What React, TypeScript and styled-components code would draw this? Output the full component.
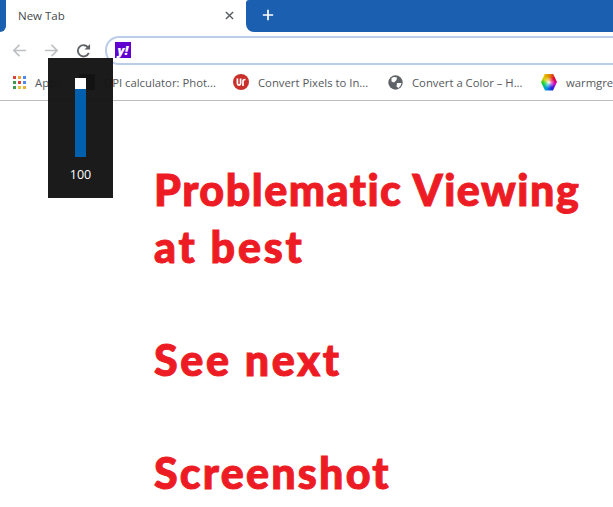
import React from "react"
import styled, { createGlobalStyle } from "styled-components"

const RED = "#ed1c24"
const BLUE = "#1a5fb0"

const Global = createGlobalStyle`
	html, body {
		margin: 0;
		padding: 0;
		background: #fff;
		overflow: hidden;
	}
	body {
		width: 613px;
		height: 507px;
		font-family: "Open Sans", "Liberation Sans", sans-serif;
	}
`

function Apps() {
	const colors = ["#d9443a", "#e8a33d", "#4a8af0", "#3f9a4e", "#d9443a", "#4a8af0", "#3f9a4e", "#e8c33d", "#e8b33d"]
	return <BookmarkSvg width="13" height="13" viewBox="0 0 13 13">
		{colors.map((c, i) => <rect key={i} x={i % 3 * 5} y={Math.floor(i / 3) * 5} width="3" height="3" fill={c} />)}
	</BookmarkSvg>
}

function Globe() {
	return <BookmarkSvg width="15" height="15" viewBox="0 0 15 15">
		<circle cx="7.5" cy="7.5" r="7.2" fill="#5f6368" />
		<path d="M3.5 3 Q6 1.5 9 2.5 L8.5 5 L6 7.5 L3.5 6.5 Z M9 8 L13.5 8 Q13 11 10.5 13 L8.5 11.5 Z" fill="#fff" />
	</BookmarkSvg>
}

function RoundLogo() {
	return <BookmarkSvg width="16" height="16" viewBox="0 0 16 16">
		<circle cx="8" cy="8" r="8" fill="#c9302c" />
		<path d="M4.4 4.5 V9.5 A1.6 1.6 0 0 0 7.6 9.5 V4.5 M10 12 V7 Q10 5.5 12.5 5.5" fill="none" stroke="#fff" strokeWidth="1.7" />
	</BookmarkSvg>
}

export default function App() {
	return <>
		<Global />
		<Page>
			<TabStrip>
				<LeftStub />
				<ActiveTab>
					<TabTitle>New Tab</TabTitle>
					<CloseIcon viewBox="0 0 10 10">
						<path d="M1 1 L9 9 M9 1 L1 9" />
					</CloseIcon>
				</ActiveTab>
				<NewTabArea>
					<PlusIcon viewBox="0 0 14 14">
						<path d="M7 1 V13 M1 7 H13" />
					</PlusIcon>
				</NewTabArea>
			</TabStrip>
			<Toolbar>
				<NavIcon viewBox="0 0 16 16" $color="#bdc0c4">
					<path d="M15 8 H2 M8 2 L2 8 L8 14" />
				</NavIcon>
				<NavIcon viewBox="0 0 16 16" $color="#bdc0c4">
					<path d="M1 8 H14 M8 2 L14 8 L8 14" />
				</NavIcon>
				<ReloadIcon viewBox="0 0 16 16">
					<path d="M13.6 10.5 A6 6 0 1 1 13 5" />
					<path className="head" d="M15 1 V7 H9 Z" />
				</ReloadIcon>
				<Omnibox>
					<YahooBox>y!</YahooBox>
				</Omnibox>
			</Toolbar>
			<Bookmarks>
				<Bookmark $width={66}><Apps /><BookmarkText>Apps</BookmarkText></Bookmark>
				<Bookmark $width={154}><DarkIcon /><BookmarkText>DPI calculator: Phot...</BookmarkText></Bookmark>
				<Bookmark $width={155}><RoundLogo /><BookmarkText>Convert Pixels to In...</BookmarkText></Bookmark>
				<Bookmark $width={153}><Globe /><BookmarkText>Convert a Color – H...</BookmarkText></Bookmark>
				<Bookmark $width={90}><Hexagon /><BookmarkText>warmgrey</BookmarkText></Bookmark>
			</Bookmarks>
			<Content>
				<Heading>
					<Line $spacing={1.5}>Problematic Viewing</Line>
					<Line $spacing={2.8}>at best</Line>
				</Heading>
				<Heading><Line $spacing={2.7}>See next</Line></Heading>
				<Heading><Line $spacing={2.2}>Screenshot</Line></Heading>
			</Content>
			<VolumeFlyout>
				<Slider>
					<Thumb />
				</Slider>
				<VolumeValue>100</VolumeValue>
			</VolumeFlyout>
		</Page>
	</>
}

const Page = styled("div")`
	position: relative;
	width: 613px;
	height: 507px;
	overflow: hidden;
	background: #fff;
`
const TabStrip = styled("div")`
	display: flex;
	height: 32px;
	background: #fff;
`
const LeftStub = styled("div")`
	width: 6px;
	background: ${BLUE};
	border-radius: 0 0 8px 0;
`
const ActiveTab = styled("div")`
	display: flex;
	align-items: center;
	justify-content: space-between;
	box-sizing: border-box;
	width: 240px;
	padding: 0 12px 2px 12px;
	background: #fff;
`
const NewTabArea = styled("div")`
	display: flex;
	align-items: center;
	flex: 1;
	padding: 0 0 2px 16px;
	background: ${BLUE};
	border-radius: 3px 0 0 8px;
`
const TabTitle = styled("span")`
	font-size: 11.5px;
	color: #45494d;
`
const CloseIcon = styled("svg")`
	width: 9px;
	height: 9px;
	path {
		fill: none;
		stroke: #5a5e62;
		stroke-width: 1.6;
	}
`
const PlusIcon = styled("svg")`
	width: 12px;
	height: 12px;
	path {
		fill: none;
		stroke: #fff;
		stroke-width: 2;
	}
`
const Toolbar = styled("div")`
	display: flex;
	align-items: center;
	gap: 17px;
	height: 36px;
	padding-left: 12px;
`
const NavIcon = styled("svg")<{ $color: string }>`
	width: 15px;
	height: 15px;
	path {
		fill: none;
		stroke: ${p => p.$color};
		stroke-width: 1.8;
	}
`
const ReloadIcon = styled("svg")`
	width: 15px;
	height: 15px;
	path {
		fill: none;
		stroke: #5f6368;
		stroke-width: 2;
	}
	path.head {
		fill: #5f6368;
		stroke: none;
	}
`
const Omnibox = styled("div")`
	display: flex;
	align-items: center;
	box-sizing: border-box;
	flex: 1;
	height: 29px;
	margin-right: -30px;
	margin-left: -3px;
	padding-left: 8px;
	border: 2px solid #bccde9;
	border-radius: 14px;
`
const YahooBox = styled("div")`
	display: flex;
	align-items: center;
	justify-content: center;
	width: 16px;
	height: 16px;
	background: #6001d2;
	color: #fff;
	font: italic 800 13px "Open Sans", sans-serif;
`
const Bookmarks = styled("div")`
	display: flex;
	align-items: center;
	box-sizing: border-box;
	height: 33px;
	padding: 0 0 4px 13px;
	border-bottom: 1px solid #bdbdbd;
`
const Bookmark = styled("div")<{ $width: number }>`
	display: flex;
	align-items: center;
	gap: 9px;
	flex: none;
	width: ${p => p.$width}px;
`
const BookmarkSvg = styled("svg")`
	flex: none;
`
const BookmarkText = styled("span")`
	font-size: 11.3px;
	color: #55595d;
	white-space: nowrap;
`
const DarkIcon = styled("div")`
	flex: none;
	width: 16px;
	height: 16px;
	background: #000;
`
const Hexagon = styled("div")`
	flex: none;
	width: 16px;
	height: 17px;
	clip-path: polygon(25% 0, 75% 0, 100% 50%, 75% 100%, 25% 100%, 0 50%);
	background:
		radial-gradient(circle, #fff 0, rgba(255, 255, 255, 0.5) 20%, rgba(255, 255, 255, 0) 50%),
		conic-gradient(#e09000, #e00030, #d000c0, #2020e0, #00a0e0, #00d030, #e0d000, #e09000);
`
const Content = styled("div")`
	padding: 60px 0 0 154px;
`
const Heading = styled("h1")`
	margin: 0 0 56px;
	font-family: "Lato", "Open Sans", sans-serif;
	font-size: 43px;
	line-height: 57px;
	font-weight: 900;
	font-variant-ligatures: none;
	-webkit-text-stroke: 1px ${RED};
	color: ${RED};
`
const Line = styled("div")<{ $spacing: number }>`
	letter-spacing: ${p => p.$spacing}px;
	white-space: nowrap;
`
const VolumeFlyout = styled("div")`
	position: absolute;
	left: 48px;
	top: 58px;
	display: flex;
	flex-direction: column;
	align-items: center;
	width: 65px;
	height: 140px;
	background: rgba(20, 20, 20, 0.97);
`
const Slider = styled("div")`
	position: relative;
	width: 11px;
	height: 79px;
	margin-top: 20px;
	background: #0060ad;
`
const Thumb = styled("div")`
	position: absolute;
	left: 0;
	top: 0;
	width: 11px;
	height: 11px;
	background: #fff;
`
const VolumeValue = styled("div")`
	margin-top: 9px;
	font-size: 12.5px;
	color: #fff;
`
